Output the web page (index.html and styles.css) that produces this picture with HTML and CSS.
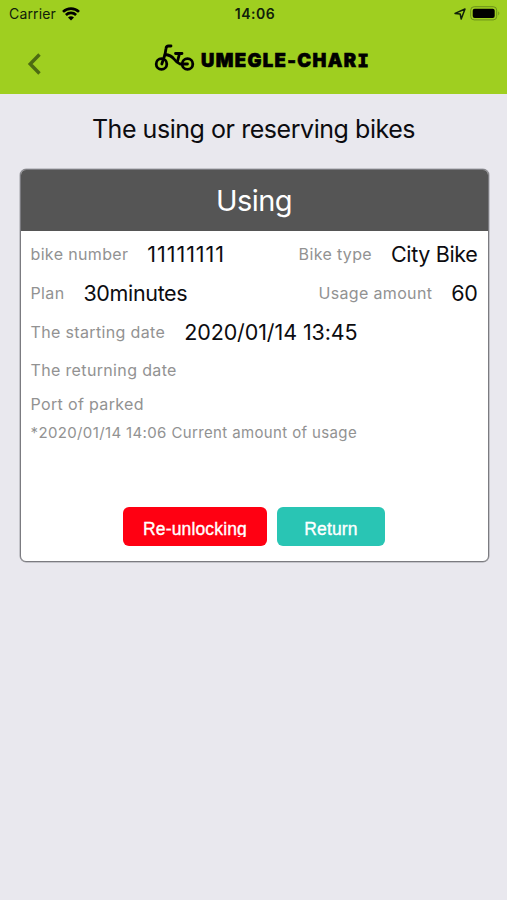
FILE: index.html
```html
<!DOCTYPE html>
<html lang="en">

<head>
    <meta charset="UTF-8">
    <meta name="viewport" content="width=device-width, initial-scale=1.0">
    <title>UMEGLE-CHARI</title>
    <link rel="stylesheet" href="styles.css">
</head>

<body>
    <header>
        <div class="status">
            <span class="carrier">Carrier
                <svg width="18" height="14" viewBox="0 0 18 14" fill="none" stroke="#000" stroke-width="2.6">
                    <path d="M1 4.9a11.4 11.4 0 0 1 16 0" />
                    <path d="M3.9 8a7.3 7.3 0 0 1 10.2 0" />
                    <path d="M9 13.5L6 10.6a4.4 4.4 0 0 1 6 0z" fill="#000" stroke="none" />
                </svg>
            </span>
            <span class="time">14:06</span>
            <span class="power">
                <svg width="12" height="12" viewBox="0 0 12 12" fill="none" stroke="#10200a" stroke-width="1.5" stroke-linejoin="round">
                    <path d="M1 5.4L11 1L7.2 11L6.2 6z" />
                </svg>
                <svg width="31" height="15" viewBox="0 0 31 15">
                    <rect x=".7" y=".7" width="26" height="13.2" rx="3.5" fill="none" stroke="#6b901a" />
                    <rect x="2.7" y="2.7" width="22" height="9.2" rx="2" />
                    <path d="M28.3 5.2q2 2.1 0 4.2z" fill="#6b901a" />
                </svg>
            </span>
        </div>
        <nav>
            <a class="back">
                <svg width="14" height="22" viewBox="0 0 14 22" fill="none" stroke="#4d6b12" stroke-width="3.4">
                    <path d="M12.5 1.5L3.2 11L12.5 20.5" />
                </svg>
            </a>
            <div class="logo">
                <svg width="41" height="28" viewBox="0 0 41 28" fill="none" stroke="#000" stroke-width="2.8" stroke-linecap="round" stroke-linejoin="round">
                    <circle cx="7.5" cy="20" r="5.3" />
                    <circle cx="33.5" cy="20" r="5.3" />
                    <path d="M17 2H14.5Q12.3 2 12 4.5L11 10.5L7.8 20" />
                    <path d="M11 10.5Q17 11 20 15T26 20H33.5" />
                    <path d="M21.5 9.5H28M25.5 9.5L23.5 17.5" />
                </svg>
                <span class="name">UMEGLE-CHAR<span class="slab">I</span></span>
            </div>
        </nav>
    </header>
    <main>
        <h1>The using or reserving bikes</h1>
        <section class="card">
            <h2>Using</h2>
            <div class="info">
                <div class="row">
                    <label>bike number</label><b class="num">11111111</b>
                    <label class="right">Bike type</label><b>City Bike</b>
                </div>
                <div class="row">
                    <label>Plan</label><b>30minutes</b>
                    <label class="right">Usage amount</label><b>60</b>
                </div>
                <div class="row">
                    <label>The starting date</label><b class="date">2020/01/14 13:45</b>
                </div>
                <div class="row"><label>The returning date</label></div>
                <div class="row port"><label>Port of parked</label></div>
                <p>*2020/01/14 14:06 Current amount of usage</p>
            </div>
            <div class="bt">
                <button class="unlock" type="button"><span>Re-unlocking</span></button>
                <button class="return" type="button"><span>Return</span></button>
            </div>
        </section>
    </main>
</body>

</html>
```

FILE: styles.css
```css
* {
    box-sizing: border-box;
}

body {
    margin: 0;
    min-height: 100vh;
    background-color: #e9e8ee;
    font-family: Inter, "Liberation Sans", sans-serif;
    color: #0c0c10;
}

header {
    height: 94px;
    background-color: #9fcf20;
}

.status {
    display: grid;
    grid-template-columns: 1fr auto 1fr;
    align-items: center;
    height: 27px;
    padding: 0 6px 0 9px;
    font-size: 14px;
    color: #10200a;
}

.carrier {
    display: flex;
    align-items: center;
    gap: 6px;
    letter-spacing: .15px;
}

.time {
    font-weight: 600;
    letter-spacing: .5px;
}

.power {
    display: flex;
    justify-content: flex-end;
    align-items: center;
    gap: 4px;
}

nav {
    display: flex;
    height: 67px;
    padding-left: 27px;
}

.back {
    padding-top: 26px;
    width: 127px;
}

.logo {
    display: flex;
    padding-top: 17px;
}

.name {
    margin: 4px 0 0 6px;
    font-size: 18.5px;
    line-height: 24px;
    font-weight: 900;
    letter-spacing: 1.35px;
    color: #000;
    -webkit-text-stroke: .6px #000;
    white-space: nowrap;
}

.slab {
    font-family: "DejaVu Sans Mono", monospace;
    font-weight: 700;
    font-size: 18.5px;
    line-height: 1;
    -webkit-text-stroke: 1.2px #000;
}

h1 {
    margin: 0;
    padding-top: 18px;
    height: 75px;
    font-size: 25px;
    line-height: 34px;
    font-weight: 400;
    text-align: center;
    letter-spacing: -.45px;
}

.card {
    width: 469px;
    height: 393px;
    margin-left: 19.5px;
    background-color: #fff;
    border: 1px solid #7b7b80;
    box-shadow: 0 0 0 .5px #a0a0a5;
    border-radius: 6px;
    overflow: hidden;
}

h2 {
    margin: 0;
    height: 61px;
    line-height: 61px;
    background-color: #555;
    color: #fff;
    font-size: 29px;
    font-weight: 400;
    text-align: center;
    letter-spacing: -.6px;
}

.info {
    height: 276px;
    padding: 4px 10px 0;
}

.row {
    display: flex;
    align-items: center;
    height: 38.7px;
    white-space: nowrap;
}

label {
    margin-right: 19px;
    font-size: 16px;
    letter-spacing: .35px;
    color: #929292;
}

.right {
    margin-left: auto;
}

b {
    font-size: 21.5px;
    font-weight: 400;
    letter-spacing: -.35px;
}

.num {
    letter-spacing: .95px;
}

.date {
    letter-spacing: -.1px;
}

.port {
    height: 28px;
}

p {
    margin: 6px 0 0;
    font-size: 15px;
    line-height: 18px;
    letter-spacing: .37px;
    color: #929292;
}

.bt {
    display: flex;
    justify-content: center;
    gap: 10px;
}

button {
    height: 39px;
    border: 0;
    border-radius: 6px;
    padding: 4px 0 0;
    color: #fff;
    font: 400 17.5px "Liberation Sans", sans-serif;
    letter-spacing: .15px;
    -webkit-text-stroke: .35px #fff;
}

button span {
    display: block;
    height: 17px;
    line-height: 19px;
}

/* label box is shorter than its descenders */
.unlock span {
    overflow: hidden;
}

.unlock {
    width: 144px;
    background-color: #ff0012;
}

.return {
    width: 108px;
    background-color: #29c5b4;
}
```
